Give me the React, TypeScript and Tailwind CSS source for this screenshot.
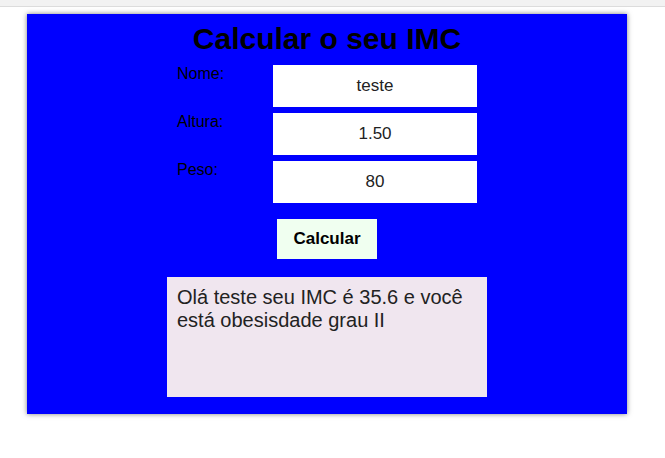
import React from "react";

export default function App() {
  const font = { fontFamily: '"Liberation Sans", Arial, sans-serif' };
  return (
    <div className="min-h-[458px] w-[665px] bg-white" style={font}>
      <div className="h-[7px] bg-[#f2f2f2] border-b border-[#dcdcdc]" />
      <div className="ml-[27px] mt-[7px] w-[600px] h-[400px] bg-[#0000ff] shadow-[0_0_5px_rgba(0,0,0,0.5)] flex flex-col items-center">
        <h1 className="mt-[8px] text-[30px] leading-[34px] font-bold text-black">Calcular o seu IMC</h1>
        <div className="mt-[9px] w-[300px] flex flex-col gap-[6px]">
          {[
            ["Nome:", "teste"],
            ["Altura:", "1.50"],
            ["Peso:", "80"],
          ].map(([label, value]) => (
            <div key={label} className="flex items-start">
              <label className="w-[96px] text-[16px] leading-[18px] text-black">{label}</label>
              <input
                readOnly
                value={value}
                className="w-[204px] h-[42px] bg-white text-center text-[17px] text-[#222] outline-none border-0"
                style={font}
              />
            </div>
          ))}
        </div>
        <button className="mt-[16px] w-[100px] h-[40px] bg-[#f0fff0] text-[17px] font-bold text-black" style={font}>
          Calcular
        </button>
        <div className="mt-[18px] w-[320px] h-[120px] bg-[#f0e6ef] px-[10px] pt-[9px] text-[20px] leading-[23px] text-[#222]">
          Olá teste seu IMC é 35.6 e você está obesisdade grau II
        </div>
      </div>
    </div>
  );
}
